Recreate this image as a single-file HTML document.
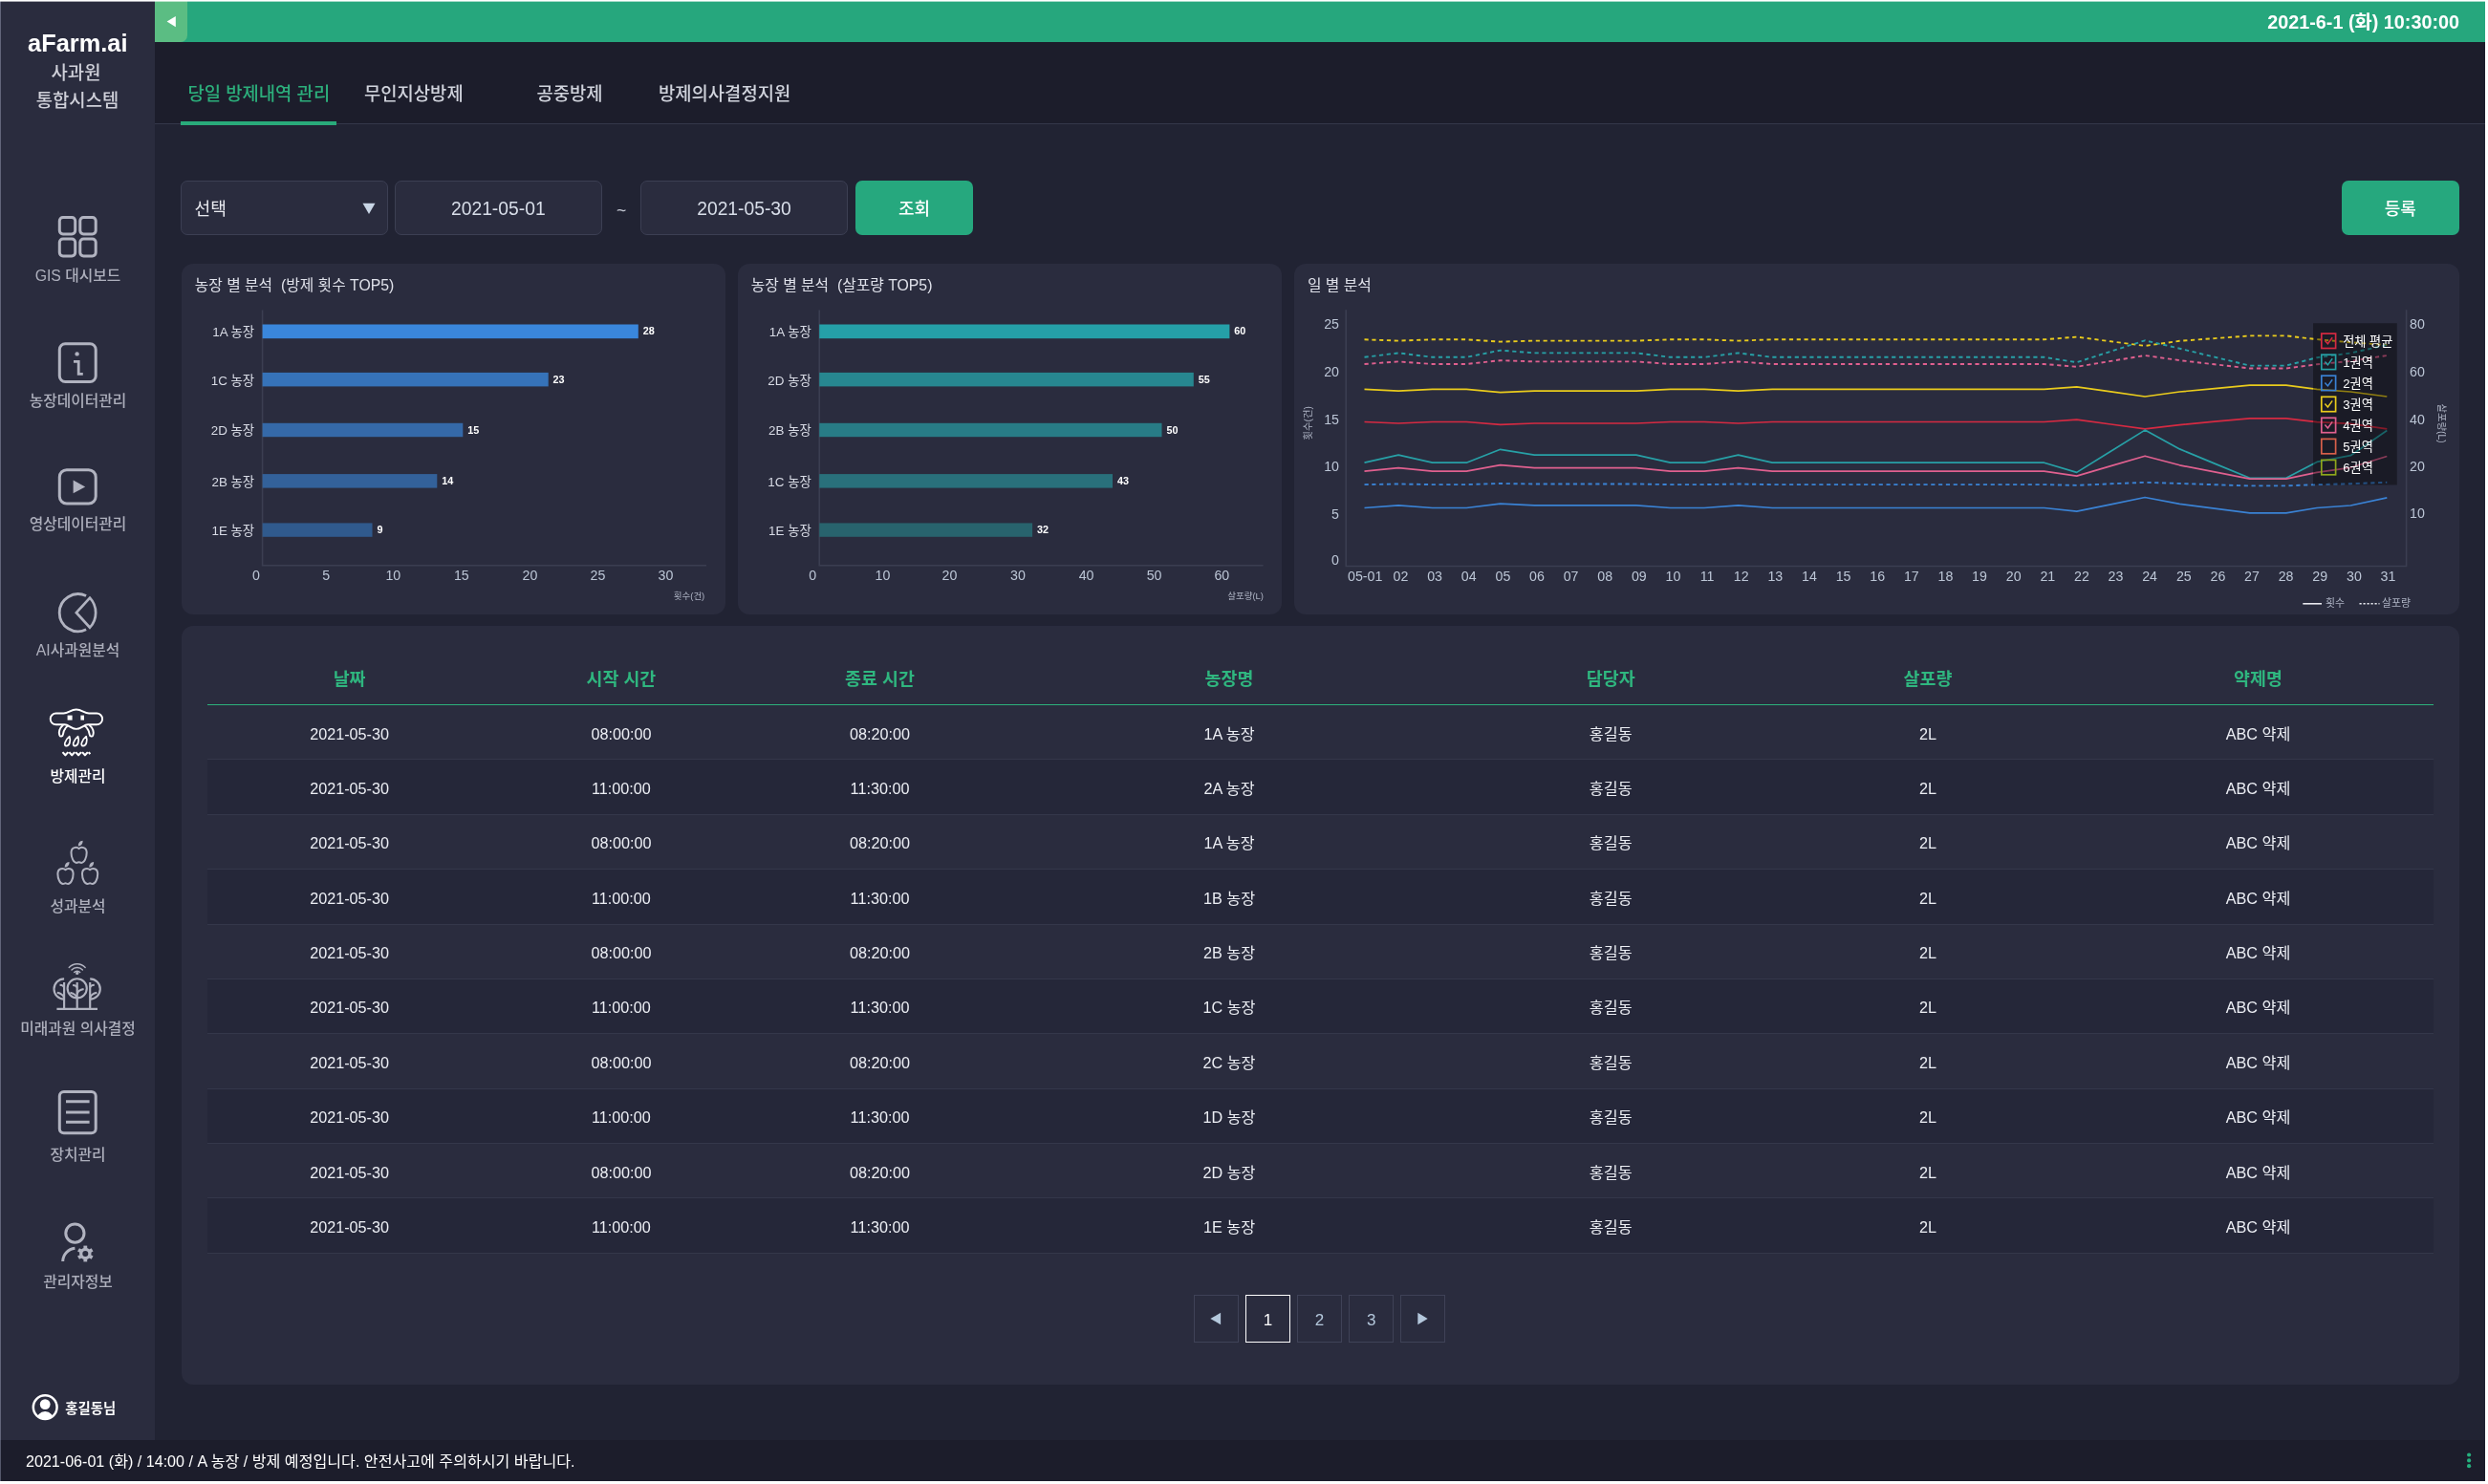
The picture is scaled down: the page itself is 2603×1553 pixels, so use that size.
<!DOCTYPE html>
<html lang="ko"><head><meta charset="utf-8"><title>aFarm.ai 방제관리</title>
<style>
html,body{margin:0;padding:0}
body{width:2603px;height:1553px;background:#fff;position:relative;overflow:hidden;font-family:"Liberation Sans","Noto Sans CJK KR",sans-serif;}
#app{position:absolute;left:0;top:0;width:2603px;height:1553px;will-change:transform;}
.abs{position:absolute}
.t{position:absolute;white-space:nowrap;line-height:1.2;}
svg{position:absolute;overflow:visible}
svg text{font-family:"Liberation Sans","Noto Sans CJK KR",sans-serif}
.panel{position:absolute;background:#2a2c3e;border-radius:12px}
.inp{position:absolute;background:#2a2c3e;border:1px solid #3c3f53;border-radius:7px;box-sizing:border-box}
.btn{position:absolute;background:#26a87e;border-radius:7px}
.row{position:absolute;left:217px;width:2329px;height:57.4px;box-sizing:border-box;border-bottom:1px solid #34374a}
.row.alt{background:#252739}
.pg{position:absolute;top:1355px;width:47px;height:49.7px;box-sizing:border-box;border:1px solid #3f4257}
</style></head>
<body>
<div id="app">
<div class="abs" style="left:0;top:1px;width:2600px;height:1549px;background:#212333"></div>
<div class="abs" style="left:162px;top:1px;width:2438px;height:128px;background:#1c1d2b"></div>
<div class="abs" style="left:162px;top:129px;width:2438px;height:1px;background:#34374a"></div>
<div class="abs" style="left:162px;top:1px;width:2438px;height:43px;background:#26a77d"></div>
<div class="abs" style="left:162px;top:1px;width:34px;height:43px;background:#5bbd83;border-radius:0 0 7px 0"></div>
<svg style="left:162px;top:2px" width="34" height="42" viewBox="162 2 34 42"><path d="M174.6 22.6 L183.8 17 L183.8 28.2 Z" fill="#fff"/></svg>
<div class="t" style="left:2573px;top:23.6px;font-size:19.8px;color:#fff;font-weight:700;transform:translate(-100%,-50%);">2021-6-1 (화) 10:30:00</div>
<div class="abs" style="left:0;top:1px;width:162px;height:1506px;background:#2a2c3e;border-left:1px solid #62657a;box-sizing:border-box"></div>
<div class="abs" style="left:0;top:1507px;width:2600px;height:43px;background:#1c1d2b;border-left:1px solid #55586b;box-sizing:border-box"></div>
<div class="t" style="left:27px;top:1530.2px;font-size:16.1px;color:#fff;font-weight:400;transform:translate(0,-50%);">2021-06-01 (화) / 14:00 / A 농장 / 방제 예정입니다. 안전사고에 주의하시기 바랍니다.</div>
<svg style="left:2570px;top:1510px" width="26" height="36" viewBox="2570 1510 26 36"><circle cx="2583.1" cy="1522.5" r="2.1" fill="#25b07e"/><circle cx="2583.1" cy="1528.4" r="2.1" fill="#25b07e"/><circle cx="2583.1" cy="1534.2" r="2.1" fill="#25b07e"/></svg>
<div class="t" style="left:81.3px;top:44.6px;font-size:25.4px;color:#fff;font-weight:700;transform:translate(-50%,-50%);">aFarm.ai</div>
<div class="t" style="left:79.5px;top:76.8px;font-size:18.8px;color:#cfd0d9;font-weight:500;transform:translate(-50%,-50%);">사과원</div>
<div class="t" style="left:81px;top:105.8px;font-size:18.8px;color:#cfd0d9;font-weight:500;transform:translate(-50%,-50%);">통합시스템</div>
<div class="t" style="left:196.5px;top:98.5px;font-size:18.8px;color:#2cae7b;font-weight:500;transform:translate(0,-50%);">당일 방제내역 관리</div>
<div class="t" style="left:381px;top:98.5px;font-size:18.8px;color:#d0d3dc;font-weight:500;transform:translate(0,-50%);">무인지상방제</div>
<div class="t" style="left:561.5px;top:98.5px;font-size:18.8px;color:#d0d3dc;font-weight:500;transform:translate(0,-50%);">공중방제</div>
<div class="t" style="left:689px;top:98.5px;font-size:18.8px;color:#d0d3dc;font-weight:500;transform:translate(0,-50%);">방제의사결정지원</div>
<div class="abs" style="left:189px;top:127px;width:163px;height:4px;background:#29aa7a"></div>
<div class="inp" style="left:189.3px;top:189.1px;width:216.6px;height:57px"></div>
<div class="t" style="left:203.5px;top:219.5px;font-size:18.2px;color:#e8e9ef;font-weight:400;transform:translate(0,-50%);">선택</div>
<svg style="left:375px;top:208px" width="24" height="20" viewBox="375 208 24 20"><path d="M379.5 212.8 L392.5 212.8 L386 224 Z" fill="#c9d6e6"/></svg>
<div class="inp" style="left:413px;top:189.1px;width:216.6px;height:57px"></div>
<div class="t" style="left:521.3px;top:219.3px;font-size:19.3px;color:#d8dee9;font-weight:400;transform:translate(-50%,-50%);">2021-05-01</div>
<div class="t" style="left:650px;top:220px;font-size:17.5px;color:#c3c7d3;font-weight:400;transform:translate(-50%,-50%);">~</div>
<div class="inp" style="left:670.1px;top:189.1px;width:216.7px;height:57px"></div>
<div class="t" style="left:778.5px;top:219.3px;font-size:19.3px;color:#d8dee9;font-weight:400;transform:translate(-50%,-50%);">2021-05-30</div>
<div class="btn" style="left:895px;top:189px;width:123.3px;height:57.2px"></div>
<div class="t" style="left:956.5px;top:219.6px;font-size:18px;color:#fff;font-weight:500;transform:translate(-50%,-50%);">조회</div>
<div class="btn" style="left:2449.5px;top:189px;width:123.7px;height:57.2px"></div>
<div class="t" style="left:2511.3px;top:219.8px;font-size:18px;color:#fff;font-weight:500;transform:translate(-50%,-50%);">등록</div>
<div class="panel" style="left:190px;top:276.1px;width:568.5px;height:367.2px"></div>
<div class="t" style="left:203.7px;top:298.5px;font-size:15.8px;color:#dfe1ea;font-weight:400;transform:translate(0,-50%);">농장 별 분석&nbsp; (방제 횟수 TOP5)</div>
<svg style="left:190px;top:276.5px" width="568.5" height="367" viewBox="190 276.5 568.5 367">
<path d="M274.6 324 V591.3 H739" fill="none" stroke="#3b3e51" stroke-width="1.6"/>
<rect x="274.6" y="339.0" width="393.2" height="14.7" fill="#3a87dc"/>
<text x="266.20000000000005" y="351.81" font-size="13.4" fill="#d9dce6" text-anchor="end" font-weight="400">1A 농장</text>
<text x="672.6999999999999" y="349.98" font-size="10.8" fill="#fff" text-anchor="start" font-weight="700">28</text>
<rect x="274.6" y="389.4" width="299.1" height="14.5" fill="#3673b9"/>
<text x="266.20000000000005" y="402.11" font-size="13.4" fill="#d9dce6" text-anchor="end" font-weight="400">1C 농장</text>
<text x="578.6" y="400.28" font-size="10.8" fill="#fff" text-anchor="start" font-weight="700">23</text>
<rect x="274.6" y="442.3" width="209.7" height="14.4" fill="#3569a8"/>
<text x="266.20000000000005" y="454.96" font-size="13.4" fill="#d9dce6" text-anchor="end" font-weight="400">2D 농장</text>
<text x="489.2" y="453.13" font-size="10.8" fill="#fff" text-anchor="start" font-weight="700">15</text>
<rect x="274.6" y="495.6" width="182.7" height="14.5" fill="#33619a"/>
<text x="266.20000000000005" y="508.31" font-size="13.4" fill="#d9dce6" text-anchor="end" font-weight="400">2B 농장</text>
<text x="462.2" y="506.48" font-size="10.8" fill="#fff" text-anchor="start" font-weight="700">14</text>
<rect x="274.6" y="546.9" width="114.9" height="14.4" fill="#305a8d"/>
<text x="266.20000000000005" y="559.56" font-size="13.4" fill="#d9dce6" text-anchor="end" font-weight="400">1E 농장</text>
<text x="394.4" y="557.73" font-size="10.8" fill="#fff" text-anchor="start" font-weight="700">9</text>
<text x="268" y="606.74" font-size="14.2" fill="#bcc6d6" text-anchor="middle" font-weight="400">0</text>
<text x="341.1" y="606.74" font-size="14.2" fill="#bcc6d6" text-anchor="middle" font-weight="400">5</text>
<text x="411.3" y="606.74" font-size="14.2" fill="#bcc6d6" text-anchor="middle" font-weight="400">10</text>
<text x="482.8" y="606.74" font-size="14.2" fill="#bcc6d6" text-anchor="middle" font-weight="400">15</text>
<text x="554.5" y="606.74" font-size="14.2" fill="#bcc6d6" text-anchor="middle" font-weight="400">20</text>
<text x="625.5" y="606.74" font-size="14.2" fill="#bcc6d6" text-anchor="middle" font-weight="400">25</text>
<text x="696.4" y="606.74" font-size="14.2" fill="#bcc6d6" text-anchor="middle" font-weight="400">30</text>
<text x="737.3" y="626.37" font-size="9.5" fill="#aeb4c4" text-anchor="end" font-weight="400">횟수(건)</text>
</svg>
<div class="panel" style="left:772px;top:276.1px;width:568.5px;height:367.2px"></div>
<div class="t" style="left:785.7px;top:298.5px;font-size:15.8px;color:#dfe1ea;font-weight:400;transform:translate(0,-50%);">농장 별 분석&nbsp; (살포량 TOP5)</div>
<svg style="left:772px;top:276.5px" width="568.5" height="367" viewBox="772 276.5 568.5 367">
<path d="M857.2 324 V591.3 H1321.6" fill="none" stroke="#3b3e51" stroke-width="1.6"/>
<rect x="857.2" y="339.0" width="429.2" height="14.7" fill="#25a0a8"/>
<text x="848.8000000000001" y="351.81" font-size="13.4" fill="#d9dce6" text-anchor="end" font-weight="400">1A 농장</text>
<text x="1291.3000000000002" y="349.98" font-size="10.8" fill="#fff" text-anchor="start" font-weight="700">60</text>
<rect x="857.2" y="389.4" width="391.6" height="14.5" fill="#278790"/>
<text x="848.8000000000001" y="402.11" font-size="13.4" fill="#d9dce6" text-anchor="end" font-weight="400">2D 농장</text>
<text x="1253.7" y="400.28" font-size="10.8" fill="#fff" text-anchor="start" font-weight="700">55</text>
<rect x="857.2" y="442.3" width="358.3" height="14.4" fill="#287c86"/>
<text x="848.8000000000001" y="454.96" font-size="13.4" fill="#d9dce6" text-anchor="end" font-weight="400">2B 농장</text>
<text x="1220.4" y="453.13" font-size="10.8" fill="#fff" text-anchor="start" font-weight="700">50</text>
<rect x="857.2" y="495.6" width="306.8" height="14.5" fill="#29707b"/>
<text x="848.8000000000001" y="508.31" font-size="13.4" fill="#d9dce6" text-anchor="end" font-weight="400">1C 농장</text>
<text x="1168.9" y="506.48" font-size="10.8" fill="#fff" text-anchor="start" font-weight="700">43</text>
<rect x="857.2" y="546.9" width="222.9" height="14.4" fill="#28636d"/>
<text x="848.8000000000001" y="559.56" font-size="13.4" fill="#d9dce6" text-anchor="end" font-weight="400">1E 농장</text>
<text x="1085.0" y="557.73" font-size="10.8" fill="#fff" text-anchor="start" font-weight="700">32</text>
<text x="850.1" y="606.74" font-size="14.2" fill="#bcc6d6" text-anchor="middle" font-weight="400">0</text>
<text x="923.5" y="606.74" font-size="14.2" fill="#bcc6d6" text-anchor="middle" font-weight="400">10</text>
<text x="993.4" y="606.74" font-size="14.2" fill="#bcc6d6" text-anchor="middle" font-weight="400">20</text>
<text x="1064.9" y="606.74" font-size="14.2" fill="#bcc6d6" text-anchor="middle" font-weight="400">30</text>
<text x="1136.6" y="606.74" font-size="14.2" fill="#bcc6d6" text-anchor="middle" font-weight="400">40</text>
<text x="1207.6" y="606.74" font-size="14.2" fill="#bcc6d6" text-anchor="middle" font-weight="400">50</text>
<text x="1278.3" y="606.74" font-size="14.2" fill="#bcc6d6" text-anchor="middle" font-weight="400">60</text>
<text x="1322" y="626.37" font-size="9.5" fill="#aeb4c4" text-anchor="end" font-weight="400">살포량(L)</text>
</svg>
<div class="panel" style="left:1354px;top:276.1px;width:1219px;height:367.2px"></div>
<div class="t" style="left:1367.9px;top:298.5px;font-size:15.8px;color:#dfe1ea;font-weight:400;transform:translate(0,-50%);">일 별 분석</div>
<svg style="left:1354px;top:276.5px" width="1219" height="367" viewBox="1354 276.5 1219 367">
<path d="M1408.2 323.7 V592 H2517.6 V323.7" fill="none" stroke="#3b3e51" stroke-width="1.6"/>
<polyline points="1427.5,354.8 1463.1,356.1 1498.6,354.8 1534.2,354.8 1569.7,357.1 1605.3,356.1 1640.8,356.1 1676.4,356.1 1711.9,356.1 1747.5,354.8 1783.0,354.8 1818.6,356.1 1854.2,354.8 1889.7,354.8 1925.3,354.8 1960.8,354.8 1996.4,354.8 2031.9,354.8 2067.5,354.8 2103.0,354.8 2138.6,354.8 2172.7,352.1 2208.4,356.8 2244.1,361.4 2280.4,356.3 2317.0,353.6 2353.8,350.9 2391.8,350.9 2424.0,354.6 2459.3,357.8 2497.3,360.5" fill="none" stroke="#e9cb1c" stroke-width="1.9" stroke-linejoin="round" stroke-dasharray="4.2 3.6"/>
<polyline points="1427.5,373.3 1463.1,368.9 1498.6,373.3 1534.2,373.3 1569.7,366.1 1605.3,368.9 1640.8,368.9 1676.4,368.9 1711.9,368.9 1747.5,373.3 1783.0,373.3 1818.6,368.9 1854.2,373.3 1889.7,373.3 1925.3,373.3 1960.8,373.3 1996.4,373.3 2031.9,373.3 2067.5,373.3 2103.0,373.3 2138.6,373.3 2172.7,378.7 2208.4,367.2 2244.1,355.8 2280.4,364.2 2317.0,373.2 2353.8,382.1 2391.8,382.1 2424.0,373.7 2459.3,369.0 2497.3,360.5" fill="none" stroke="#27a0a6" stroke-width="1.9" stroke-linejoin="round" stroke-dasharray="4.2 3.6"/>
<polyline points="1427.5,380.5 1463.1,377.9 1498.6,380.5 1534.2,380.5 1569.7,376.7 1605.3,377.9 1640.8,377.9 1676.4,377.9 1711.9,377.9 1747.5,380.5 1783.0,380.5 1818.6,377.9 1854.2,380.5 1889.7,380.5 1925.3,380.5 1960.8,380.5 1996.4,380.5 2031.9,380.5 2067.5,380.5 2103.0,380.5 2138.6,380.5 2172.7,383.3 2208.4,377.4 2244.1,371.5 2280.4,376.6 2317.0,380.8 2353.8,385.0 2391.8,385.0 2424.0,380.8 2459.3,377.4 2497.3,371.5" fill="none" stroke="#e0608f" stroke-width="1.9" stroke-linejoin="round" stroke-dasharray="4.2 3.6"/>
<polyline points="1427.5,406.8 1463.1,408.6 1498.6,406.8 1534.2,406.8 1569.7,410.1 1605.3,408.6 1640.8,408.6 1676.4,408.6 1711.9,408.6 1747.5,406.8 1783.0,406.8 1818.6,408.6 1854.2,406.8 1889.7,406.8 1925.3,406.8 1960.8,406.8 1996.4,406.8 2031.9,406.8 2067.5,406.8 2103.0,406.8 2138.6,406.8 2172.7,404.4 2208.4,409.4 2244.1,414.5 2280.4,409.5 2317.0,406.1 2353.8,402.7 2391.8,402.7 2424.0,406.9 2459.3,409.5 2497.3,414.5" fill="none" stroke="#e9cb1c" stroke-width="1.7" stroke-linejoin="round"/>
<polyline points="1427.5,441.0 1463.1,442.5 1498.6,441.0 1534.2,441.0 1569.7,443.8 1605.3,442.5 1640.8,442.5 1676.4,442.5 1711.9,442.5 1747.5,441.0 1783.0,441.0 1818.6,442.5 1854.2,441.0 1889.7,441.0 1925.3,441.0 1960.8,441.0 1996.4,441.0 2031.9,441.0 2067.5,441.0 2103.0,441.0 2138.6,441.0 2172.7,438.7 2208.4,443.5 2244.1,448.3 2280.4,444.1 2317.0,440.7 2353.8,437.3 2391.8,437.3 2424.0,441.2 2459.3,442.9 2497.3,448.3" fill="none" stroke="#d62a42" stroke-width="1.7" stroke-linejoin="round"/>
<polyline points="1427.5,483.7 1463.1,475.7 1498.6,483.7 1534.2,483.7 1569.7,469.8 1605.3,475.7 1640.8,475.7 1676.4,475.7 1711.9,475.7 1747.5,483.7 1783.0,483.7 1818.6,475.7 1854.2,483.7 1889.7,483.7 1925.3,483.7 1960.8,483.7 1996.4,483.7 2031.9,483.7 2067.5,483.7 2103.0,483.7 2138.6,483.7 2172.7,493.9 2208.4,471.7 2244.1,449.6 2280.4,469.4 2317.0,484.6 2353.8,499.8 2391.8,499.8 2424.0,482.9 2459.3,476.2 2497.3,450.0" fill="none" stroke="#27a0a6" stroke-width="1.7" stroke-linejoin="round"/>
<polyline points="1427.5,492.7 1463.1,489.1 1498.6,492.7 1534.2,492.7 1569.7,486.2 1605.3,489.1 1640.8,489.1 1676.4,489.1 1711.9,489.1 1747.5,492.7 1783.0,492.7 1818.6,489.1 1854.2,492.7 1889.7,492.7 1925.3,492.7 1960.8,492.7 1996.4,492.7 2031.9,492.7 2067.5,492.7 2103.0,492.7 2138.6,492.7 2172.7,497.6 2208.4,487.1 2244.1,476.7 2280.4,486.3 2317.0,493.4 2353.8,500.6 2391.8,500.6 2424.0,493.9 2459.3,488.8 2497.3,477.0" fill="none" stroke="#e0608f" stroke-width="1.7" stroke-linejoin="round"/>
<polyline points="1427.5,506.6 1463.1,506.0 1498.6,506.6 1534.2,506.6 1569.7,505.5 1605.3,506.0 1640.8,506.0 1676.4,506.0 1711.9,506.0 1747.5,506.6 1783.0,506.6 1818.6,506.0 1854.2,506.6 1889.7,506.6 1925.3,506.6 1960.8,506.6 1996.4,506.6 2031.9,506.6 2067.5,506.6 2103.0,506.6 2138.6,506.6 2172.7,507.4 2208.4,505.8 2244.1,504.3 2280.4,505.5 2317.0,506.7 2353.8,507.9 2391.8,507.9 2424.0,506.6 2459.3,505.7 2497.3,504.3" fill="none" stroke="#3a82d4" stroke-width="1.9" stroke-linejoin="round" stroke-dasharray="4.2 3.6"/>
<polyline points="1427.5,531.0 1463.1,528.4 1498.6,531.0 1534.2,531.0 1569.7,526.6 1605.3,528.4 1640.8,528.4 1676.4,528.4 1711.9,528.4 1747.5,531.0 1783.0,531.0 1818.6,528.4 1854.2,531.0 1889.7,531.0 1925.3,531.0 1960.8,531.0 1996.4,531.0 2031.9,531.0 2067.5,531.0 2103.0,531.0 2138.6,531.0 2172.7,534.7 2208.4,527.3 2244.1,520.0 2280.4,526.8 2317.0,531.6 2353.8,536.4 2391.8,536.4 2424.0,531.0 2459.3,528.5 2497.3,520.4" fill="none" stroke="#3a82d4" stroke-width="1.7" stroke-linejoin="round"/>
<text x="1401" y="343.34" font-size="14.2" fill="#bcc6d6" text-anchor="end" font-weight="400">25</text>
<text x="1401" y="393.44" font-size="14.2" fill="#bcc6d6" text-anchor="end" font-weight="400">20</text>
<text x="1401" y="443.04" font-size="14.2" fill="#bcc6d6" text-anchor="end" font-weight="400">15</text>
<text x="1401" y="492.44" font-size="14.2" fill="#bcc6d6" text-anchor="end" font-weight="400">10</text>
<text x="1401" y="542.04" font-size="14.2" fill="#bcc6d6" text-anchor="end" font-weight="400">5</text>
<text x="1401" y="590.54" font-size="14.2" fill="#bcc6d6" text-anchor="end" font-weight="400">0</text>
<text x="2521.1" y="343.44" font-size="14.2" fill="#bcc6d6" text-anchor="start" font-weight="400">80</text>
<text x="2521.1" y="393.34" font-size="14.2" fill="#bcc6d6" text-anchor="start" font-weight="400">60</text>
<text x="2521.1" y="443.54" font-size="14.2" fill="#bcc6d6" text-anchor="start" font-weight="400">40</text>
<text x="2521.1" y="492.34" font-size="14.2" fill="#bcc6d6" text-anchor="start" font-weight="400">20</text>
<text x="2521.1" y="541.94" font-size="14.2" fill="#bcc6d6" text-anchor="start" font-weight="400">10</text>
<text x="1428.2" y="607.14" font-size="14.2" fill="#bcc6d6" text-anchor="middle" font-weight="400">05-01</text>
<text x="1465.5" y="607.14" font-size="14.2" fill="#bcc6d6" text-anchor="middle" font-weight="400">02</text>
<text x="1501.1" y="607.14" font-size="14.2" fill="#bcc6d6" text-anchor="middle" font-weight="400">03</text>
<text x="1536.7" y="607.14" font-size="14.2" fill="#bcc6d6" text-anchor="middle" font-weight="400">04</text>
<text x="1572.4" y="607.14" font-size="14.2" fill="#bcc6d6" text-anchor="middle" font-weight="400">05</text>
<text x="1608.0" y="607.14" font-size="14.2" fill="#bcc6d6" text-anchor="middle" font-weight="400">06</text>
<text x="1643.6" y="607.14" font-size="14.2" fill="#bcc6d6" text-anchor="middle" font-weight="400">07</text>
<text x="1679.2" y="607.14" font-size="14.2" fill="#bcc6d6" text-anchor="middle" font-weight="400">08</text>
<text x="1714.8" y="607.14" font-size="14.2" fill="#bcc6d6" text-anchor="middle" font-weight="400">09</text>
<text x="1750.5" y="607.14" font-size="14.2" fill="#bcc6d6" text-anchor="middle" font-weight="400">10</text>
<text x="1786.1" y="607.14" font-size="14.2" fill="#bcc6d6" text-anchor="middle" font-weight="400">11</text>
<text x="1821.7" y="607.14" font-size="14.2" fill="#bcc6d6" text-anchor="middle" font-weight="400">12</text>
<text x="1857.3" y="607.14" font-size="14.2" fill="#bcc6d6" text-anchor="middle" font-weight="400">13</text>
<text x="1892.9" y="607.14" font-size="14.2" fill="#bcc6d6" text-anchor="middle" font-weight="400">14</text>
<text x="1928.6" y="607.14" font-size="14.2" fill="#bcc6d6" text-anchor="middle" font-weight="400">15</text>
<text x="1964.2" y="607.14" font-size="14.2" fill="#bcc6d6" text-anchor="middle" font-weight="400">16</text>
<text x="1999.8" y="607.14" font-size="14.2" fill="#bcc6d6" text-anchor="middle" font-weight="400">17</text>
<text x="2035.4" y="607.14" font-size="14.2" fill="#bcc6d6" text-anchor="middle" font-weight="400">18</text>
<text x="2071.0" y="607.14" font-size="14.2" fill="#bcc6d6" text-anchor="middle" font-weight="400">19</text>
<text x="2106.7" y="607.14" font-size="14.2" fill="#bcc6d6" text-anchor="middle" font-weight="400">20</text>
<text x="2142.3" y="607.14" font-size="14.2" fill="#bcc6d6" text-anchor="middle" font-weight="400">21</text>
<text x="2177.9" y="607.14" font-size="14.2" fill="#bcc6d6" text-anchor="middle" font-weight="400">22</text>
<text x="2213.5" y="607.14" font-size="14.2" fill="#bcc6d6" text-anchor="middle" font-weight="400">23</text>
<text x="2249.1" y="607.14" font-size="14.2" fill="#bcc6d6" text-anchor="middle" font-weight="400">24</text>
<text x="2284.8" y="607.14" font-size="14.2" fill="#bcc6d6" text-anchor="middle" font-weight="400">25</text>
<text x="2320.4" y="607.14" font-size="14.2" fill="#bcc6d6" text-anchor="middle" font-weight="400">26</text>
<text x="2356.0" y="607.14" font-size="14.2" fill="#bcc6d6" text-anchor="middle" font-weight="400">27</text>
<text x="2391.6" y="607.14" font-size="14.2" fill="#bcc6d6" text-anchor="middle" font-weight="400">28</text>
<text x="2427.2" y="607.14" font-size="14.2" fill="#bcc6d6" text-anchor="middle" font-weight="400">29</text>
<text x="2462.9" y="607.14" font-size="14.2" fill="#bcc6d6" text-anchor="middle" font-weight="400">30</text>
<text x="2498.5" y="607.14" font-size="14.2" fill="#bcc6d6" text-anchor="middle" font-weight="400">31</text>
<text x="0" y="0" font-size="10.3" fill="#aeb4c4" text-anchor="middle" transform="translate(1371.6 442.3) rotate(-90)">횟수(건)</text>
<text x="0" y="0" font-size="10.3" fill="#aeb4c4" text-anchor="middle" transform="translate(2551.4 442.6) rotate(90)">살포량(L)</text>
<rect x="2420" y="337.7" width="87.8" height="169.3" fill="#000" fill-opacity="0.38"/>
<rect x="2428.8" y="348.6" width="14.8" height="15.4" fill="none" stroke="#d62a42" stroke-width="1.7"/>
<path d="M2432.4 355.9 L2435.4 359.3 L2440.2 352.7" fill="none" stroke="#d62a42" stroke-width="1.5"/>
<text x="2451.2" y="361.19" font-size="13.2" fill="#fff" text-anchor="start" font-weight="400">전체 평균</text>
<rect x="2428.8" y="370.7" width="14.8" height="15.4" fill="none" stroke="#27a0a6" stroke-width="1.7"/>
<path d="M2432.4 378.0 L2435.4 381.4 L2440.2 374.8" fill="none" stroke="#27a0a6" stroke-width="1.5"/>
<text x="2451.2" y="383.24" font-size="13.2" fill="#fff" text-anchor="start" font-weight="400">1권역</text>
<rect x="2428.8" y="392.7" width="14.8" height="15.4" fill="none" stroke="#3a82d4" stroke-width="1.7"/>
<path d="M2432.4 400.0 L2435.4 403.4 L2440.2 396.8" fill="none" stroke="#3a82d4" stroke-width="1.5"/>
<text x="2451.2" y="405.29" font-size="13.2" fill="#fff" text-anchor="start" font-weight="400">2권역</text>
<rect x="2428.8" y="414.8" width="14.8" height="15.4" fill="none" stroke="#e9cb1c" stroke-width="1.7"/>
<path d="M2432.4 422.1 L2435.4 425.5 L2440.2 418.9" fill="none" stroke="#e9cb1c" stroke-width="1.5"/>
<text x="2451.2" y="427.34" font-size="13.2" fill="#fff" text-anchor="start" font-weight="400">3권역</text>
<rect x="2428.8" y="436.8" width="14.8" height="15.4" fill="none" stroke="#e0608f" stroke-width="1.7"/>
<path d="M2432.4 444.1 L2435.4 447.5 L2440.2 440.9" fill="none" stroke="#e0608f" stroke-width="1.5"/>
<text x="2451.2" y="449.39" font-size="13.2" fill="#fff" text-anchor="start" font-weight="400">4권역</text>
<rect x="2428.8" y="458.9" width="14.8" height="15.4" fill="none" stroke="#d9604a" stroke-width="1.7"/>
<text x="2451.2" y="471.44" font-size="13.2" fill="#fff" text-anchor="start" font-weight="400">5권역</text>
<rect x="2428.8" y="480.9" width="14.8" height="15.4" fill="none" stroke="#8ea61c" stroke-width="1.7"/>
<text x="2451.2" y="493.49" font-size="13.2" fill="#fff" text-anchor="start" font-weight="400">6권역</text>
<path d="M2409.3 631.3 H2429" stroke="#e8e9ef" stroke-width="1.6" fill="none"/>
<text x="2433" y="634.87" font-size="10.9" fill="#aeb4c4" text-anchor="start" font-weight="400">횟수</text>
<path d="M2468.5 631.3 H2489.5" stroke="#e8e9ef" stroke-width="1.6" stroke-dasharray="2.2 1.8" fill="none"/>
<text x="2492" y="634.87" font-size="10.9" fill="#aeb4c4" text-anchor="start" font-weight="400">살포량</text>
</svg>
<div class="panel" style="left:190px;top:655.2px;width:2383px;height:794.2px"></div>
<div class="t" style="left:365.6px;top:711px;font-size:18.4px;color:#2fb67f;font-weight:700;transform:translate(-50%,-50%);">날짜</div>
<div class="t" style="left:649.9px;top:711px;font-size:18.4px;color:#2fb67f;font-weight:700;transform:translate(-50%,-50%);">시작 시간</div>
<div class="t" style="left:920.5px;top:711px;font-size:18.4px;color:#2fb67f;font-weight:700;transform:translate(-50%,-50%);">종료 시간</div>
<div class="t" style="left:1286px;top:711px;font-size:18.4px;color:#2fb67f;font-weight:700;transform:translate(-50%,-50%);">농장명</div>
<div class="t" style="left:1685.2px;top:711px;font-size:18.4px;color:#2fb67f;font-weight:700;transform:translate(-50%,-50%);">담당자</div>
<div class="t" style="left:2017px;top:711px;font-size:18.4px;color:#2fb67f;font-weight:700;transform:translate(-50%,-50%);">살포량</div>
<div class="t" style="left:2362.5px;top:711px;font-size:18.4px;color:#2fb67f;font-weight:700;transform:translate(-50%,-50%);">약제명</div>
<div class="abs" style="left:217px;top:736.6px;width:2329px;height:1.8px;background:#2cb27c"></div>
<div class="row" style="top:738.0px"></div>
<div class="t" style="left:365.6px;top:768.6px;font-size:16.2px;color:#eceef4;font-weight:400;transform:translate(-50%,-50%);">2021-05-30</div>
<div class="t" style="left:649.9px;top:768.6px;font-size:16.2px;color:#eceef4;font-weight:400;transform:translate(-50%,-50%);">08:00:00</div>
<div class="t" style="left:920.5px;top:768.6px;font-size:16.2px;color:#eceef4;font-weight:400;transform:translate(-50%,-50%);">08:20:00</div>
<div class="t" style="left:1286px;top:768.6px;font-size:16.2px;color:#eceef4;font-weight:400;transform:translate(-50%,-50%);">1A 농장</div>
<div class="t" style="left:1685.2px;top:768.6px;font-size:16.2px;color:#eceef4;font-weight:400;transform:translate(-50%,-50%);">홍길동</div>
<div class="t" style="left:2017px;top:768.6px;font-size:16.2px;color:#eceef4;font-weight:400;transform:translate(-50%,-50%);">2L</div>
<div class="t" style="left:2362.5px;top:768.6px;font-size:16.2px;color:#eceef4;font-weight:400;transform:translate(-50%,-50%);">ABC 약제</div>
<div class="row alt" style="top:795.37px"></div>
<div class="t" style="left:365.6px;top:825.97px;font-size:16.2px;color:#eceef4;font-weight:400;transform:translate(-50%,-50%);">2021-05-30</div>
<div class="t" style="left:649.9px;top:825.97px;font-size:16.2px;color:#eceef4;font-weight:400;transform:translate(-50%,-50%);">11:00:00</div>
<div class="t" style="left:920.5px;top:825.97px;font-size:16.2px;color:#eceef4;font-weight:400;transform:translate(-50%,-50%);">11:30:00</div>
<div class="t" style="left:1286px;top:825.97px;font-size:16.2px;color:#eceef4;font-weight:400;transform:translate(-50%,-50%);">2A 농장</div>
<div class="t" style="left:1685.2px;top:825.97px;font-size:16.2px;color:#eceef4;font-weight:400;transform:translate(-50%,-50%);">홍길동</div>
<div class="t" style="left:2017px;top:825.97px;font-size:16.2px;color:#eceef4;font-weight:400;transform:translate(-50%,-50%);">2L</div>
<div class="t" style="left:2362.5px;top:825.97px;font-size:16.2px;color:#eceef4;font-weight:400;transform:translate(-50%,-50%);">ABC 약제</div>
<div class="row" style="top:852.74px"></div>
<div class="t" style="left:365.6px;top:883.34px;font-size:16.2px;color:#eceef4;font-weight:400;transform:translate(-50%,-50%);">2021-05-30</div>
<div class="t" style="left:649.9px;top:883.34px;font-size:16.2px;color:#eceef4;font-weight:400;transform:translate(-50%,-50%);">08:00:00</div>
<div class="t" style="left:920.5px;top:883.34px;font-size:16.2px;color:#eceef4;font-weight:400;transform:translate(-50%,-50%);">08:20:00</div>
<div class="t" style="left:1286px;top:883.34px;font-size:16.2px;color:#eceef4;font-weight:400;transform:translate(-50%,-50%);">1A 농장</div>
<div class="t" style="left:1685.2px;top:883.34px;font-size:16.2px;color:#eceef4;font-weight:400;transform:translate(-50%,-50%);">홍길동</div>
<div class="t" style="left:2017px;top:883.34px;font-size:16.2px;color:#eceef4;font-weight:400;transform:translate(-50%,-50%);">2L</div>
<div class="t" style="left:2362.5px;top:883.34px;font-size:16.2px;color:#eceef4;font-weight:400;transform:translate(-50%,-50%);">ABC 약제</div>
<div class="row alt" style="top:910.11px"></div>
<div class="t" style="left:365.6px;top:940.71px;font-size:16.2px;color:#eceef4;font-weight:400;transform:translate(-50%,-50%);">2021-05-30</div>
<div class="t" style="left:649.9px;top:940.71px;font-size:16.2px;color:#eceef4;font-weight:400;transform:translate(-50%,-50%);">11:00:00</div>
<div class="t" style="left:920.5px;top:940.71px;font-size:16.2px;color:#eceef4;font-weight:400;transform:translate(-50%,-50%);">11:30:00</div>
<div class="t" style="left:1286px;top:940.71px;font-size:16.2px;color:#eceef4;font-weight:400;transform:translate(-50%,-50%);">1B 농장</div>
<div class="t" style="left:1685.2px;top:940.71px;font-size:16.2px;color:#eceef4;font-weight:400;transform:translate(-50%,-50%);">홍길동</div>
<div class="t" style="left:2017px;top:940.71px;font-size:16.2px;color:#eceef4;font-weight:400;transform:translate(-50%,-50%);">2L</div>
<div class="t" style="left:2362.5px;top:940.71px;font-size:16.2px;color:#eceef4;font-weight:400;transform:translate(-50%,-50%);">ABC 약제</div>
<div class="row" style="top:967.48px"></div>
<div class="t" style="left:365.6px;top:998.08px;font-size:16.2px;color:#eceef4;font-weight:400;transform:translate(-50%,-50%);">2021-05-30</div>
<div class="t" style="left:649.9px;top:998.08px;font-size:16.2px;color:#eceef4;font-weight:400;transform:translate(-50%,-50%);">08:00:00</div>
<div class="t" style="left:920.5px;top:998.08px;font-size:16.2px;color:#eceef4;font-weight:400;transform:translate(-50%,-50%);">08:20:00</div>
<div class="t" style="left:1286px;top:998.08px;font-size:16.2px;color:#eceef4;font-weight:400;transform:translate(-50%,-50%);">2B 농장</div>
<div class="t" style="left:1685.2px;top:998.08px;font-size:16.2px;color:#eceef4;font-weight:400;transform:translate(-50%,-50%);">홍길동</div>
<div class="t" style="left:2017px;top:998.08px;font-size:16.2px;color:#eceef4;font-weight:400;transform:translate(-50%,-50%);">2L</div>
<div class="t" style="left:2362.5px;top:998.08px;font-size:16.2px;color:#eceef4;font-weight:400;transform:translate(-50%,-50%);">ABC 약제</div>
<div class="row alt" style="top:1024.85px"></div>
<div class="t" style="left:365.6px;top:1055.45px;font-size:16.2px;color:#eceef4;font-weight:400;transform:translate(-50%,-50%);">2021-05-30</div>
<div class="t" style="left:649.9px;top:1055.45px;font-size:16.2px;color:#eceef4;font-weight:400;transform:translate(-50%,-50%);">11:00:00</div>
<div class="t" style="left:920.5px;top:1055.45px;font-size:16.2px;color:#eceef4;font-weight:400;transform:translate(-50%,-50%);">11:30:00</div>
<div class="t" style="left:1286px;top:1055.45px;font-size:16.2px;color:#eceef4;font-weight:400;transform:translate(-50%,-50%);">1C 농장</div>
<div class="t" style="left:1685.2px;top:1055.45px;font-size:16.2px;color:#eceef4;font-weight:400;transform:translate(-50%,-50%);">홍길동</div>
<div class="t" style="left:2017px;top:1055.45px;font-size:16.2px;color:#eceef4;font-weight:400;transform:translate(-50%,-50%);">2L</div>
<div class="t" style="left:2362.5px;top:1055.45px;font-size:16.2px;color:#eceef4;font-weight:400;transform:translate(-50%,-50%);">ABC 약제</div>
<div class="row" style="top:1082.22px"></div>
<div class="t" style="left:365.6px;top:1112.82px;font-size:16.2px;color:#eceef4;font-weight:400;transform:translate(-50%,-50%);">2021-05-30</div>
<div class="t" style="left:649.9px;top:1112.82px;font-size:16.2px;color:#eceef4;font-weight:400;transform:translate(-50%,-50%);">08:00:00</div>
<div class="t" style="left:920.5px;top:1112.82px;font-size:16.2px;color:#eceef4;font-weight:400;transform:translate(-50%,-50%);">08:20:00</div>
<div class="t" style="left:1286px;top:1112.82px;font-size:16.2px;color:#eceef4;font-weight:400;transform:translate(-50%,-50%);">2C 농장</div>
<div class="t" style="left:1685.2px;top:1112.82px;font-size:16.2px;color:#eceef4;font-weight:400;transform:translate(-50%,-50%);">홍길동</div>
<div class="t" style="left:2017px;top:1112.82px;font-size:16.2px;color:#eceef4;font-weight:400;transform:translate(-50%,-50%);">2L</div>
<div class="t" style="left:2362.5px;top:1112.82px;font-size:16.2px;color:#eceef4;font-weight:400;transform:translate(-50%,-50%);">ABC 약제</div>
<div class="row alt" style="top:1139.59px"></div>
<div class="t" style="left:365.6px;top:1170.19px;font-size:16.2px;color:#eceef4;font-weight:400;transform:translate(-50%,-50%);">2021-05-30</div>
<div class="t" style="left:649.9px;top:1170.19px;font-size:16.2px;color:#eceef4;font-weight:400;transform:translate(-50%,-50%);">11:00:00</div>
<div class="t" style="left:920.5px;top:1170.19px;font-size:16.2px;color:#eceef4;font-weight:400;transform:translate(-50%,-50%);">11:30:00</div>
<div class="t" style="left:1286px;top:1170.19px;font-size:16.2px;color:#eceef4;font-weight:400;transform:translate(-50%,-50%);">1D 농장</div>
<div class="t" style="left:1685.2px;top:1170.19px;font-size:16.2px;color:#eceef4;font-weight:400;transform:translate(-50%,-50%);">홍길동</div>
<div class="t" style="left:2017px;top:1170.19px;font-size:16.2px;color:#eceef4;font-weight:400;transform:translate(-50%,-50%);">2L</div>
<div class="t" style="left:2362.5px;top:1170.19px;font-size:16.2px;color:#eceef4;font-weight:400;transform:translate(-50%,-50%);">ABC 약제</div>
<div class="row" style="top:1196.96px"></div>
<div class="t" style="left:365.6px;top:1227.56px;font-size:16.2px;color:#eceef4;font-weight:400;transform:translate(-50%,-50%);">2021-05-30</div>
<div class="t" style="left:649.9px;top:1227.56px;font-size:16.2px;color:#eceef4;font-weight:400;transform:translate(-50%,-50%);">08:00:00</div>
<div class="t" style="left:920.5px;top:1227.56px;font-size:16.2px;color:#eceef4;font-weight:400;transform:translate(-50%,-50%);">08:20:00</div>
<div class="t" style="left:1286px;top:1227.56px;font-size:16.2px;color:#eceef4;font-weight:400;transform:translate(-50%,-50%);">2D 농장</div>
<div class="t" style="left:1685.2px;top:1227.56px;font-size:16.2px;color:#eceef4;font-weight:400;transform:translate(-50%,-50%);">홍길동</div>
<div class="t" style="left:2017px;top:1227.56px;font-size:16.2px;color:#eceef4;font-weight:400;transform:translate(-50%,-50%);">2L</div>
<div class="t" style="left:2362.5px;top:1227.56px;font-size:16.2px;color:#eceef4;font-weight:400;transform:translate(-50%,-50%);">ABC 약제</div>
<div class="row alt" style="top:1254.33px"></div>
<div class="t" style="left:365.6px;top:1284.93px;font-size:16.2px;color:#eceef4;font-weight:400;transform:translate(-50%,-50%);">2021-05-30</div>
<div class="t" style="left:649.9px;top:1284.93px;font-size:16.2px;color:#eceef4;font-weight:400;transform:translate(-50%,-50%);">11:00:00</div>
<div class="t" style="left:920.5px;top:1284.93px;font-size:16.2px;color:#eceef4;font-weight:400;transform:translate(-50%,-50%);">11:30:00</div>
<div class="t" style="left:1286px;top:1284.93px;font-size:16.2px;color:#eceef4;font-weight:400;transform:translate(-50%,-50%);">1E 농장</div>
<div class="t" style="left:1685.2px;top:1284.93px;font-size:16.2px;color:#eceef4;font-weight:400;transform:translate(-50%,-50%);">홍길동</div>
<div class="t" style="left:2017px;top:1284.93px;font-size:16.2px;color:#eceef4;font-weight:400;transform:translate(-50%,-50%);">2L</div>
<div class="t" style="left:2362.5px;top:1284.93px;font-size:16.2px;color:#eceef4;font-weight:400;transform:translate(-50%,-50%);">ABC 약제</div>
<div class="pg" style="left:1249px"></div>
<svg style="left:1249px;top:1355px" width="47" height="49" viewBox="1249 1355 47 49"><path d="M1266.3 1380 L1277.1 1373.8 L1277.1 1386.2 Z" fill="#b4c8dc"/></svg>
<div class="pg" style="left:1303px;border:1.7px solid #fff"></div>
<div class="t" style="left:1326.5px;top:1382.3px;font-size:17px;color:#fff;font-weight:400;transform:translate(-50%,-50%);">1</div>
<div class="pg" style="left:1357px"></div>
<div class="t" style="left:1380.5px;top:1382.3px;font-size:17px;color:#b4c8dc;font-weight:400;transform:translate(-50%,-50%);">2</div>
<div class="pg" style="left:1411.2px"></div>
<div class="t" style="left:1434.7px;top:1382.3px;font-size:17px;color:#b4c8dc;font-weight:400;transform:translate(-50%,-50%);">3</div>
<div class="pg" style="left:1465.3px"></div>
<svg style="left:1465.3px;top:1355px" width="47" height="49" viewBox="1465.3 1355 47 49"><path d="M1494.0 1380 L1483.6 1373.8 L1483.6 1386.2 Z" fill="#b4c8dc"/></svg>
<svg style="left:0;top:0" width="162" height="1507" viewBox="0 0 162 1507">
<rect x="62.3" y="227.4" width="16.4" height="17.5" rx="3.6" fill="none" stroke="#b1b3c0" stroke-width="3"/>
<rect x="62.3" y="249.9" width="16.4" height="18.0" rx="3.6" fill="none" stroke="#b1b3c0" stroke-width="3"/>
<rect x="83.8" y="227.4" width="16.4" height="17.5" rx="3.6" fill="none" stroke="#b1b3c0" stroke-width="3"/>
<rect x="83.8" y="249.9" width="16.4" height="18.0" rx="3.6" fill="none" stroke="#b1b3c0" stroke-width="3"/>
<rect x="62.3" y="359.7" width="37.9" height="39.8" rx="6" fill="none" stroke="#b1b3c0" stroke-width="3"/>
<circle cx="80.6" cy="370.4" r="2.2" fill="#b1b3c0"/>
<path d="M77 378.4 H82.2 V391.4 H86.8" fill="none" stroke="#b1b3c0" stroke-width="2.8"/>
<rect x="62.3" y="491.7" width="37.9" height="35.4" rx="7.5" fill="none" stroke="#b1b3c0" stroke-width="3"/>
<path d="M76.6 502.6 L89.2 509.4 L76.6 516.2 Z" fill="#b1b3c0"/>
<path d="M90.09 623.6 A19.5 19.5 0 1 0 90.09 658.8" fill="none" stroke="#b1b3c0" stroke-width="2.8"/>
<path d="M79.9 641.2 L94 625.7 A22.7 22.7 0 0 1 94 656.7 Z" fill="none" stroke="#b1b3c0" stroke-width="2.7" stroke-linejoin="miter"/>
<path d="M58.6 746.5 H66.5 C71.5 746.5 74 742.5 79.8 742.5 C85.6 742.5 88.1 746.5 93.1 746.5 H101.2 A5.9 5.9 0 0 1 101.2 758.3 H92 C87.5 758.3 85.5 762.9 79.8 762.9 C74.1 762.9 72.1 758.3 67.6 758.3 H58.6 A5.9 5.9 0 0 1 58.6 746.5 Z" fill="none" stroke="#fff" stroke-width="1.9" stroke-linejoin="round"/>
<rect x="70.6" y="748.6" width="5.0" height="5.0" fill="#fff"/><rect x="84.4" y="748.6" width="3.6" height="5.0" fill="#fff"/>
<path d="M65.8 759 C62.5 762 61.2 766 62.3 769.3 C63 771.2 65.6 771 65.9 768.6 C66.3 765 68 762 70.8 759.8" fill="none" stroke="#fff" stroke-width="1.9" stroke-linecap="round"/>
<path d="M 93.8 759.0 C 97.1 762.0 98.4 766.0 97.3 769.3 C 96.6 771.2 94.0 771.0 93.7 768.6 C 93.3 765.0 91.6 762.0 88.8 759.8" fill="none" stroke="#fff" stroke-width="1.9" stroke-linecap="round"/>
<path d="M72.7 770.7 C74.4 775.3 72.6 780.6 69.5 780.6 C66.2 780.6 67.7 774.7 72.7 770.7 Z" fill="none" stroke="#fff" stroke-width="1.7" stroke-linejoin="round"/>
<path d="M81.6 770.7 C83.3 775.3 81.5 780.6 78.4 780.6 C75.1 780.6 76.6 774.7 81.6 770.7 Z" fill="none" stroke="#fff" stroke-width="1.7" stroke-linejoin="round"/>
<path d="M90.2 770.7 C91.9 775.3 90.1 780.6 87.0 780.6 C83.7 780.6 85.2 774.7 90.2 770.7 Z" fill="none" stroke="#fff" stroke-width="1.7" stroke-linejoin="round"/>
<path d="M65.5 787.1 L68.4 790.3 L71.3 787.1 M72.35 787.1 L75.25 790.3 L78.15 787.1 M79.2 787.1 L82.1 790.3 L85.0 787.1 M86.05 787.1 L88.95 790.3 L91.85 787.1 M92.9 787.1 L94.2 789.2" fill="none" stroke="#fff" stroke-width="2.1" stroke-linejoin="round"/>
<path d="M82.6 888.0999999999999 C84.6 886.1999999999999 90.69999999999999 886.0 90.69999999999999 892.3 C90.69999999999999 897.8 88.1 902.9 85.19999999999999 902.9 C84.1 902.9 83.39999999999999 902.1999999999999 82.6 902.1999999999999 C81.8 902.1999999999999 81.1 902.9 80.0 902.9 C77.1 902.9 74.5 897.8 74.5 892.3 C74.5 886.0 80.6 886.1999999999999 82.6 888.0999999999999 Z" fill="none" stroke="#b1b3c0" stroke-width="2.0" stroke-linejoin="round"/><path d="M81.89999999999999 885.5999999999999 C81.49999999999999 882.3999999999999 83.49999999999999 880.0999999999999 86.6 879.8 C86.8 882.9999999999999 84.69999999999999 885.1999999999999 81.89999999999999 885.5999999999999 Z" fill="#b1b3c0"/>
<path d="M68.5 910.1999999999999 C70.5 908.3 76.6 908.1 76.6 914.4 C76.6 919.9 74.0 925.0 71.1 925.0 C70.0 925.0 69.3 924.3 68.5 924.3 C67.7 924.3 67.0 925.0 65.9 925.0 C63.0 925.0 60.4 919.9 60.4 914.4 C60.4 908.1 66.5 908.3 68.5 910.1999999999999 Z" fill="none" stroke="#b1b3c0" stroke-width="2.0" stroke-linejoin="round"/><path d="M67.8 907.6999999999999 C67.39999999999999 904.4999999999999 69.39999999999999 902.1999999999999 72.5 901.9 C72.7 905.0999999999999 70.6 907.3 67.8 907.6999999999999 Z" fill="#b1b3c0"/>
<path d="M94.1 910.1999999999999 C96.1 908.3 102.19999999999999 908.1 102.19999999999999 914.4 C102.19999999999999 919.9 99.6 925.0 96.69999999999999 925.0 C95.6 925.0 94.89999999999999 924.3 94.1 924.3 C93.3 924.3 92.6 925.0 91.5 925.0 C88.6 925.0 86.0 919.9 86.0 914.4 C86.0 908.1 92.1 908.3 94.1 910.1999999999999 Z" fill="none" stroke="#b1b3c0" stroke-width="2.0" stroke-linejoin="round"/><path d="M93.39999999999999 907.6999999999999 C92.99999999999999 904.4999999999999 94.99999999999999 902.1999999999999 98.1 901.9 C98.3 905.0999999999999 96.19999999999999 907.3 93.39999999999999 907.6999999999999 Z" fill="#b1b3c0"/>
<circle cx="80.7" cy="1018.4" r="1.7" fill="#b1b3c0"/>
<path d="M77.73 1017.52 A4.0 4.0 0 0 1 83.67 1017.52" fill="none" stroke="#b1b3c0" stroke-width="1.4" stroke-linecap="round"/>
<path d="M74.98 1015.05 A7.7 7.7 0 0 1 86.42 1015.05" fill="none" stroke="#b1b3c0" stroke-width="1.4" stroke-linecap="round"/>
<path d="M72.23 1012.57 A11.4 11.4 0 0 1 89.17 1012.57" fill="none" stroke="#b1b3c0" stroke-width="1.4" stroke-linecap="round"/>
<circle cx="80.7" cy="1034.3" r="10.1" fill="none" stroke="#b1b3c0" stroke-width="2.15"/>
<path d="M67.1 1024.4 A10.6 10.6 0 0 0 67.1 1045.6" fill="none" stroke="#b1b3c0" stroke-width="2.15"/>
<path d="M94.2 1024.4 A10.6 10.6 0 0 1 94.2 1045.6" fill="none" stroke="#b1b3c0" stroke-width="2.15"/>
<path d="M67.1 1028 V1055.8 M80.7 1028 V1055.8 M94.2 1028 V1055.8 M59.4 1055.8 H102" fill="none" stroke="#b1b3c0" stroke-width="2.15"/>
<path d="M80.7 1033.6 C80.2 1031.6 78.4 1031 76.1 1031 M80.7 1040.2 C81.5 1037.2 84.4 1035.6 87.6 1035 M80.7 1044.6 C79.8 1041.4 77 1039.6 73.4 1038.8 M67.1 1033.2 C66.6 1031.4 64.8 1030.9 62.5 1030.8 M67.1 1044.2 C66.2 1041.2 63.4 1039.5 59.8 1038.8 M94.2 1033.2 C94.7 1031.4 96.5 1030.9 98.8 1030.8 M94.2 1044.2 C95.1 1041.2 97.9 1039.5 101.4 1038.8" fill="none" stroke="#b1b3c0" stroke-width="2.1"/>
<rect x="62.3" y="1142.5" width="37.9" height="43.2" rx="4.5" fill="none" stroke="#b1b3c0" stroke-width="3"/>
<path d="M69 1152.7 H93.6 M69 1164.1 H93.6 M69 1174.3 H93.6" stroke="#b1b3c0" stroke-width="3" fill="none"/>
<circle cx="78.4" cy="1290.6" r="9.6" fill="none" stroke="#b1b3c0" stroke-width="3"/>
<path d="M65.7 1320 A14.2 14.2 0 0 1 78.4 1306.2" fill="none" stroke="#b1b3c0" stroke-width="3"/>
<circle cx="89.3" cy="1312.0" r="4.6" fill="none" stroke="#b1b3c0" stroke-width="3.2"/>
<path d="M94.15 1314.8 L96.57 1316.2" stroke="#b1b3c0" stroke-width="3.8" fill="none"/>
<path d="M89.3 1317.6 L89.3 1320.4" stroke="#b1b3c0" stroke-width="3.8" fill="none"/>
<path d="M84.45 1314.8 L82.03 1316.2" stroke="#b1b3c0" stroke-width="3.8" fill="none"/>
<path d="M84.45 1309.2 L82.03 1307.8" stroke="#b1b3c0" stroke-width="3.8" fill="none"/>
<path d="M89.3 1306.4 L89.3 1303.6" stroke="#b1b3c0" stroke-width="3.8" fill="none"/>
<path d="M94.15 1309.2 L96.57 1307.8" stroke="#b1b3c0" stroke-width="3.8" fill="none"/>
<clipPath id="uc"><circle cx="47.2" cy="1472.6" r="12.2"/></clipPath>
<circle cx="47.2" cy="1472.6" r="12.4" fill="none" stroke="#fff" stroke-width="2.5"/>
<circle cx="47.2" cy="1469.6" r="5.4" fill="#fff"/>
<ellipse cx="47.2" cy="1487" rx="9.3" ry="10" fill="#fff" clip-path="url(#uc)"/>
</svg>
<div class="t" style="left:81.5px;top:288.70000000000005px;font-size:15.8px;color:#adafbc;font-weight:500;transform:translate(-50%,-50%);">GIS 대시보드</div>
<div class="t" style="left:81.5px;top:419.90000000000003px;font-size:15.8px;color:#adafbc;font-weight:500;transform:translate(-50%,-50%);">농장데이터관리</div>
<div class="t" style="left:81.5px;top:548.7px;font-size:15.8px;color:#adafbc;font-weight:500;transform:translate(-50%,-50%);">영상데이터관리</div>
<div class="t" style="left:81.5px;top:680.7px;font-size:15.8px;color:#adafbc;font-weight:500;transform:translate(-50%,-50%);">AI사과원분석</div>
<div class="t" style="left:81.5px;top:813.3000000000001px;font-size:15.8px;color:#fff;font-weight:500;transform:translate(-50%,-50%);">방제관리</div>
<div class="t" style="left:81.5px;top:948.8000000000001px;font-size:15.8px;color:#adafbc;font-weight:500;transform:translate(-50%,-50%);">성과분석</div>
<div class="t" style="left:81.5px;top:1077.1px;font-size:15.8px;color:#adafbc;font-weight:500;transform:translate(-50%,-50%);">미래과원 의사결정</div>
<div class="t" style="left:81.5px;top:1208.8px;font-size:15.8px;color:#adafbc;font-weight:500;transform:translate(-50%,-50%);">장치관리</div>
<div class="t" style="left:81.5px;top:1341.8px;font-size:15.8px;color:#adafbc;font-weight:500;transform:translate(-50%,-50%);">관리자정보</div>
<div class="t" style="left:68.2px;top:1475.2px;font-size:14.4px;color:#fff;font-weight:700;transform:translate(0,-50%);">홍길동님</div>
<div class="abs" style="left:0;top:1px;width:2600px;height:1px;background:rgba(255,255,255,0.6)"></div>
</div>
</body></html>
